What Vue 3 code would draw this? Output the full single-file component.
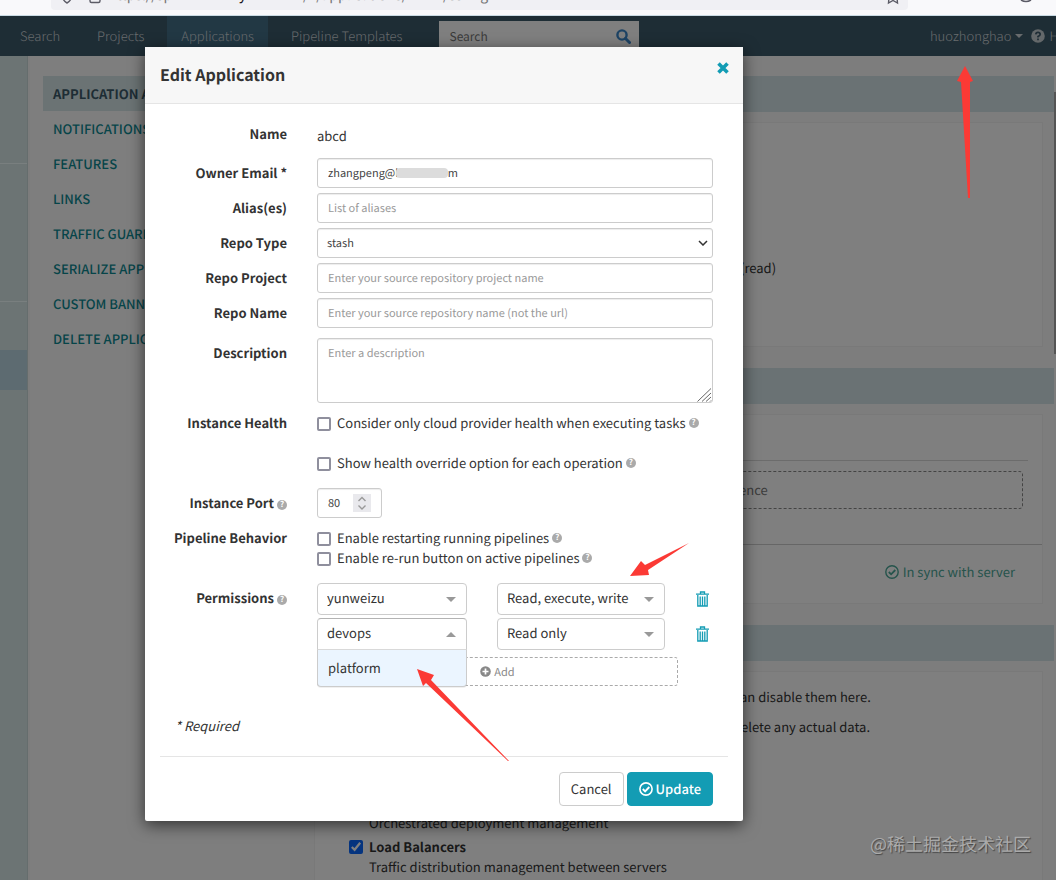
<script setup>
import { ref } from 'vue'

const sections = ['APPLICATION ATTRIBUTES', 'NOTIFICATIONS', 'FEATURES', 'LINKS', 'TRAFFIC GUARDS', 'SERIALIZE APPLICATION', 'CUSTOM BANNERS', 'DELETE APPLICATION']
const tabs = ['Search', 'Projects', 'Applications', 'Pipeline Templates']

const email = ref('zhangpeng@l' + '\u00a0'.repeat(20) + 'm')
const aliases = ref('')
const repoType = ref('stash')
const repoProject = ref('')
const repoName = ref('')
const description = ref('')
const port = ref(80)
const group = ref('yunweizu')
const firstAccess = ref('Read, execute, write')
const secondAccess = ref('Read only')
const menuOpen = ref(true)
</script>

<template>
  <div class="page">
    <div class="browser">
      <div class="address">
        <svg class="b-shield" width="12" height="8" viewBox="0 0 12 8"><path d="M1 0C2 4 4 6 6 7c2-1 4-3 5-7" fill="none" stroke="#5b5b66" stroke-width="1.4" /></svg>
        <svg class="b-lock" width="12" height="8" viewBox="0 0 12 8"><path d="M1 0v5q0 1.500 1.500 1.500h7Q11 6.500 11 5V0" fill="none" stroke="#5b5b66" stroke-width="1.400" /></svg>
        <span class="url-a">https://sp</span>
        <span class="url-b">y</span>
        <span class="url-c">/#/applications/</span>
        <span class="url-d">/config</span>
        <svg class="b-star" width="12" height="8" viewBox="0 0 12 8"><path d="M2 0 1.500 6 6 3.500 10.500 6 10 0" fill="none" stroke="#5b5b66" stroke-width="1.400" /></svg>
      </div>
      <svg class="b-ext" width="12" height="4" viewBox="0 0 12 4"><path d="M1 0q5 3 10 0" fill="none" stroke="#5b5b66" stroke-width="1.500" /></svg>
    </div>

    <div class="app">
      <header class="topbar">
        <nav class="tabs">
          <a v-for="t in tabs" :key="t" href="#" :class="{ active: t === 'Applications' }">{{ t }}</a>
        </nav>
        <div class="search">
          <input type="search" aria-label="Search" placeholder="Search" />
          <svg width="15" height="15" viewBox="0 0 15 15"><circle cx="6" cy="6" r="4.600" fill="none" stroke="#3a86c8" stroke-width="2.400" /><path d="m9.500 9.500 4 4" stroke="#3a86c8" stroke-width="3" stroke-linecap="round" /></svg>
        </div>
        <div class="user">
          <a href="#">huozhonghao<i class="caret"></i></a>
          <a href="#" class="help-link">
            <svg width="14" height="14" viewBox="0 0 14 14"><circle cx="7" cy="7" r="6.800" fill="#c8d0d4" /><path d="M4.800 5.400Q5 3.400 7 3.400t2.200 1.800Q9.200 6.500 7 7.600v.8M7 9.600v1.600" fill="none" stroke="#3e5a6c" stroke-width="1.700" /></svg>
            Help
          </a>
        </div>
      </header>

      <div class="body">
        <div class="rail"><i class="r1"></i><i class="r2"></i><i class="r3"></i></div>
        <nav class="side">
          <a v-for="(s, i) in sections" :key="s" href="#" :class="{ current: i === 0 }">{{ s }}</a>
        </nav>
        <main class="content">
          <section>
            <div class="bar"></div>
            <div class="card first"><p class="offset">(read)</p></div>
          </section>
          <section>
            <div class="bar"></div>
            <div class="card second">
              <div class="inner">
                <div class="rule"></div>
                <div class="dashed"><span>ence</span></div>
              </div>
              <div class="sync">
                <svg width="14" height="14" viewBox="0 0 14 14"><circle cx="7" cy="7" r="6.200" fill="none" stroke="currentColor" stroke-width="1.400" /><path d="m3.800 7 2.300 2.300 4.200-4.300" fill="none" stroke="currentColor" stroke-width="1.800" /></svg>
                In sync with server
              </div>
            </div>
          </section>
          <section>
            <div class="bar"></div>
            <div class="card third">
              <p class="offset">an disable them here.</p>
              <p class="offset next">delete any actual data.</p>
              <div class="features">
                <p>Orchestrated deployment management</p>
                <div class="feature">
                  <input id="lb" type="checkbox" checked />
                  <label for="lb">Load Balancers</label>
                </div>
                <p>Traffic distribution management between servers</p>
              </div>
            </div>
          </section>
        </main>
        <div class="scroll"></div>
      </div>

      <div class="backdrop">
        <div class="modal" role="dialog" aria-labelledby="title">
          <div class="modal-head">
            <h1 id="title">Edit Application</h1>
            <button type="button" class="close" aria-label="Close">
              <svg width="12" height="12" viewBox="0 0 12 12"><path d="m1.500 1.500 9 9m0-9-9 9" stroke="#139cb4" stroke-width="3.600" /></svg>
            </button>
          </div>

          <form class="form" @submit.prevent>
            <div class="row">
              <span class="label">Name</span>
              <span class="static">abcd</span>
            </div>
            <div class="row">
              <label class="label" for="email">Owner Email *</label>
              <div class="field"><input id="email" v-model="email" class="input" type="text" /><i class="smudge"></i></div>
            </div>
            <div class="row">
              <label class="label" for="alias">Alias(es)</label>
              <input id="alias" v-model="aliases" class="input" type="text" placeholder="List of aliases" />
            </div>
            <div class="row">
              <label class="label" for="type">Repo Type</label>
              <div class="field">
                <select id="type" v-model="repoType" class="input native"><option>stash</option></select>
                <svg class="chev" width="10" height="6" viewBox="0 0 10 6"><path d="m1 1 4 4 4-4" fill="none" stroke="#333" stroke-width="1.500" /></svg>
              </div>
            </div>
            <div class="row">
              <label class="label" for="project">Repo Project</label>
              <input id="project" v-model="repoProject" class="input" type="text" placeholder="Enter your source repository project name" />
            </div>
            <div class="row">
              <label class="label" for="repo">Repo Name</label>
              <input id="repo" v-model="repoName" class="input" type="text" placeholder="Enter your source repository name (not the url)" />
            </div>
            <div class="row spaced">
              <label class="label" for="desc">Description</label>
              <div class="field">
                <textarea id="desc" v-model="description" class="input area" placeholder="Enter a description"></textarea>
                <svg class="grip" width="15" height="14" viewBox="0 0 15 14"><path d="M0.500 13.500 14 0.500M5 13.500 14 5M9 13.500l5-4.500M13 13.500l1-1" stroke="#666" stroke-width="1" fill="none" /></svg>
              </div>
            </div>
            <div class="row">
              <span class="label">Instance Health</span>
              <div class="health">
                <label class="check"><input type="checkbox" />Consider only cloud provider health when executing tasks<i class="q">?</i></label>
                <label class="check"><input type="checkbox" />Show health override option for each operation<i class="q">?</i></label>
              </div>
            </div>
            <div class="row spaced">
              <label class="label" for="port">Instance Port<i class="q">?</i></label>
              <div class="port">
                <input id="port" v-model="port" class="input" type="number" />
                <svg class="spin" width="18" height="18" viewBox="0 0 18 18"><path fill="#e9e9ed" d="M0 0h18v18H0z" /><path d="m5.500 7 3.500-3.500L12.500 7m-7 4.500L9 15l3.500-3.500" fill="none" stroke="#999" stroke-width="1.400" /></svg>
              </div>
            </div>
            <div class="row">
              <span class="label">Pipeline Behavior</span>
              <div class="behavior">
                <label class="check"><input type="checkbox" />Enable restarting running pipelines<i class="q">?</i></label>
                <label class="check"><input type="checkbox" />Enable re-run button on active pipelines<i class="q">?</i></label>
              </div>
            </div>
            <div class="row spaced">
              <span class="label">Permissions<i class="q">?</i></span>
              <div class="perms">
                <div class="perm">
                  <div class="pick group"><select v-model="group" aria-label="Group"><option>yunweizu</option></select></div>
                  <div class="pick access"><select v-model="firstAccess" aria-label="Access"><option>Read, execute, write</option></select></div>
                  <button type="button" class="trash" aria-label="Remove yunweizu">
                    <svg width="15" height="16" viewBox="-1 0 15 16"><path d="M4.500 3V1h4v2M0 3.200h13M1.800 4v11h9.400V4M4.200 5.500v9M6.500 5.500v9M8.800 5.500v9" fill="none" stroke="#139cb4" stroke-width="1.300" /></svg>
                  </button>
                </div>
                <div class="perm">
                  <div class="pick group open">
                    <button type="button" aria-haspopup="listbox" :aria-expanded="menuOpen" @click="menuOpen = !menuOpen">devops</button>
                    <ul v-if="menuOpen" role="listbox" aria-label="Group"><li role="option">platform</li></ul>
                  </div>
                  <div class="pick access"><select v-model="secondAccess" aria-label="Access"><option>Read only</option></select></div>
                  <button type="button" class="trash" aria-label="Remove devops">
                    <svg width="15" height="16" viewBox="-1 0 15 16"><path d="M4.500 3V1h4v2M0 3.200h13M1.800 4v11h9.400V4M4.200 5.500v9M6.500 5.500v9M8.800 5.500v9" fill="none" stroke="#139cb4" stroke-width="1.300" /></svg>
                  </button>
                </div>
                <button type="button" class="add">
                  <svg width="11" height="11" viewBox="0 0 11 11"><circle cx="5.500" cy="5.500" r="5.300" fill="#888" /><path d="M5.500 2.500v6m-3-3h6" stroke="#fff" stroke-width="1.700" /></svg>
                  Add
                </button>
              </div>
            </div>
            <p class="required">* Required</p>
          </form>

          <div class="modal-foot">
            <button type="button" class="btn">Cancel</button>
            <button type="button" class="btn primary">
              <svg width="14" height="14" viewBox="0 0 14 14"><circle cx="7" cy="7" r="6.100" fill="none" stroke="#fff" stroke-width="1.600" /><path d="m3.800 7 2.300 2.300 4.200-4.300" fill="none" stroke="#fff" stroke-width="1.900" /></svg>
              Update
            </button>
          </div>
        </div>
      </div>
    </div>

    <svg class="arrows" width="1056" height="880" viewBox="0 0 1056 880" fill="#fb3a35">
      <path d="M965 66 957 81 961 82 968 198 970 198 970 82 973 81Z" />
      <path d="M630 576 641 561 645 565 689 543 648 570 649 575Z" />
      <path d="M417 669 434 675 431 680 509 761 508 761 426 683 423 686Z" />
    </svg>
    <div class="watermark">@稀土掘金技术社区</div>
  </div>
</template>

<style>
body { background: #fff; }
</style>

<style scoped>
* { box-sizing: border-box; }
.page { position: relative; height: 100vh; min-height: 840px; overflow: hidden; display: flex; flex-direction: column; font-family: "Noto Sans CJK SC", "Noto Sans", sans-serif; font-size: 13px; line-height: 20px; color: #333; text-rendering: geometricPrecision; }
a { text-decoration: none; color: inherit; }
p, h1, ul { margin: 0; padding: 0; }
button, input, select, textarea { font: inherit; color: inherit; text-rendering: inherit; }
button { cursor: pointer; }
i { font-style: normal; }

.browser { height: 16px; flex: none; position: relative; overflow: hidden; background: #f9f9fb; border-bottom: 1px solid #c9dae3; }
.address { position: relative; height: 10px; margin: 0 148px 0 51px; background: #f0f0f4; border-radius: 0 0 4px 4px; overflow: hidden; font-size: 14px; color: #777; }
.address span, .address svg { position: absolute; }
.address span { top: -15px; }
.b-shield { left: 10px; top: -4px; }
.b-lock { left: 38px; top: -4px; }
.b-star { right: 9px; top: -3px; }
.url-a { left: 57px; }
.url-b { left: 188px; color: #15141a; }
.url-c { left: 252px; }
.url-d { left: 392px; }
.b-ext { position: absolute; right: 24px; top: 0; }

.app { position: relative; flex: 1; min-height: 0; overflow: hidden; display: flex; flex-direction: column; }
.topbar { flex: none; height: 40px; display: flex; background: #3c5a6a; color: #d0d6da; line-height: 40px; overflow: hidden; white-space: nowrap; }
.tabs { display: flex; gap: 9px; padding-left: 6px; font-weight: 300; flex: none; }
.tabs a { padding: 0 14px; }
.tabs .active { background: #447089; }
.search { display: flex; align-items: center; width: 200px; height: 30px; flex: none; margin: 5px 0 0 23px; padding: 0 8px 0 10px; background: #fff; }
.search input { flex: 1; min-width: 0; border: 0; padding: 2px 0 0; background: none; outline: 0; line-height: 20px; font-size: 12px; }
.search input::placeholder { color: #777; opacity: 1; }
.user { display: flex; gap: 8px; margin-left: auto; margin-right: -21px; font-weight: 300; }
.user a { display: flex; align-items: center; gap: 4px; }
.caret { border: 4px solid transparent; border-top-color: currentColor; border-bottom: 0; }

.body { flex: 1; min-height: 0; display: flex; background: #f8f8f8; }
.rail { position: relative; width: 28px; flex: none; background: #d8e8e8; border-right: 1px solid #cbdada; }
.rail i { position: absolute; left: 0; right: 0; height: 1px; background: #f2ffff; }
.rail .r1 { top: 107px; }
.rail .r2 { top: 245px; }
.rail .r3 { top: 294px; height: 40px; background: #bad7e3; }
.side { width: 260px; flex: none; margin-left: 2px; padding: 20px 0 0 13px; background: #fdfdfd; display: flex; flex-direction: column; color: #0d8a93; }
.side a { line-height: 35px; padding-left: 10px; white-space: nowrap; font-weight: 500; }
.side .current { background: #d6e7e8; color: #3c5a6a; font-weight: 700; }
.content { flex: 1; min-width: 0; padding: 20px 0 0 13px; background: #fbfbfb; overflow: hidden; }
.bar { height: 36px; background: #d4e5e8; }
.card { margin: 10px 11px 21px; background: #fff; border: 1px solid #f3f3f3; }
.offset { padding-left: 425px; }
.first { height: 225px; padding-top: 135px; }
.second { height: 190px; }
.inner { height: 130px; padding: 45px 14px 0; border-bottom: 1px solid #cdcdcd; }
.rule { height: 1px; background: #d8d8d8; }
.dashed { height: 38px; margin: 10px 5px 0 0; padding-left: 409px; border: 1px dashed #888; border-radius: 4px; line-height: 36px; color: #777; }
.sync { display: flex; align-items: center; justify-content: flex-end; gap: 4px; height: 54px; padding-right: 27px; color: #4ca898; }
.third { height: 300px; padding-top: 15px; margin-bottom: 0; }
.next { margin-top: 10px; padding-left: 418px; }
.features { margin-top: 76px; padding-left: 54px; }
.feature { display: flex; align-items: center; margin: 4px 0 0 -20px; gap: 6px; font-weight: 700; }
.feature input { width: 14px; height: 14px; margin: 0; accent-color: #0a68ff; }
.scroll { width: 2px; flex: none; height: 262px; margin-top: 36px; background: #aaa; }

.backdrop { position: absolute; inset: 0; background: rgba(0, 0, 0, .5); padding: 31px 313px 0 145px; }
.modal { background: #fff; border-radius: 2px; box-shadow: 0 4px 16px rgba(0, 0, 0, .6); }
.modal-head { display: flex; align-items: flex-start; justify-content: space-between; height: 57px; padding: 0 14px 0 15px; background: #f7f7f7; border-bottom: 1px solid #e5e5e5; }
h1 { font-size: 16px; line-height: 54px; font-weight: 700; }
.close { border: 0; background: none; padding: 15px 0; line-height: 12px; display: flex; }
.form { display: flex; flex-direction: column; gap: 5px; padding: 15px 30px 0 0; }
.row { display: grid; grid-template-columns: 142px minmax(0, 1fr); column-gap: 30px; align-items: start; }
.spaced { margin-top: 5px; }
.label { line-height: 30px; text-align: right; font-weight: 700; }
.static { line-height: 34px; }
.field { position: relative; display: flex; }
.input { width: 100%; height: 30px; padding: 0 10px; border: 1px solid #ccc; border-radius: 3px; background: #fff; font-size: 11px; line-height: 20px; box-shadow: inset 0 1px 1px rgba(0, 0, 0, .075); outline: 0; color: #444; }
.input::placeholder { color: #999; opacity: 1; }
.native { appearance: none; padding: 0 9px; }
.chev { position: absolute; right: 5px; top: 12px; }
.area { height: 65px; padding: 4px 10px; resize: none; display: block; }
.grip { position: absolute; right: 1px; bottom: 1px; }
.smudge { position: absolute; left: 79px; top: 10px; width: 52px; height: 10px; border-radius: 4px; background: #dcdcdc; }
.check { display: flex; align-items: center; }
.check input { appearance: none; width: 14px; height: 14px; margin: 1px 6px 0 0; border: 2px solid #8f8f9d; border-radius: 2px; background: #fff; }
.health { display: grid; gap: 10px; line-height: 30px; }
.behavior { padding: 5px 0; }
.q { display: inline-block; width: 10px; height: 10px; margin-left: 3px; border-radius: 50%; background: #aaa; color: #fff; font-size: 8px; line-height: 10px; font-weight: 700; text-align: center; vertical-align: 1px; }
.port { position: relative; width: 65px; }
.port .input { display: block; appearance: textfield; }
.port .input::-webkit-inner-spin-button { appearance: none; }
.spin { position: absolute; right: 11px; top: 6px; }
.perms { display: flex; flex-direction: column; gap: 3px; }
.perm { display: flex; gap: 30px; }
.pick { position: relative; height: 32px; }
.pick select, .pick > button { display: block; width: 100%; height: 32px; appearance: none; border: 1px solid #ccc; border-radius: 4px; background: #fff; padding: 0 9px 2px; text-align: left; line-height: 20px; outline: 0; }
.pick::after { content: ""; position: absolute; right: 11px; top: 14px; border: 5px solid transparent; border-top-color: #999; border-bottom: 0; pointer-events: none; }
.open::after { border: 5px solid transparent; border-bottom-color: #999; border-top: 0; }
.pick.open > button { border-radius: 4px 4px 0 0; border-color: #b3b3b3 #ccc #d9d9d9; }
.group { width: 150px; }
.access { width: 168px; }
.open ul { position: absolute; z-index: 1; top: 32px; left: 0; right: 0; list-style: none; border: 1px solid #ccc; border-top: 0; border-radius: 0 0 4px 4px; background: #ebf5ff; padding: 8px 10px; box-shadow: 0 1px 0 rgba(0, 0, 0, .06); }
.trash { border: 0; background: none; padding: 0; display: flex; align-items: center; }
.add { display: flex; align-items: center; justify-content: center; gap: 3px; width: 361px; height: 29px; margin-top: 4px; border: 1px dashed #aaa; border-radius: 3px; background: #fff; font-size: 11px; color: #888; }
.required { padding: 25px 0 0 30px; font-style: italic; }
.modal-foot { display: flex; justify-content: flex-end; gap: 3px; margin: 20px 15px 0; padding: 15px 15px; border-top: 1px solid #e5e5e5; }
.btn { height: 34px; padding: 0 11px; border: 1px solid #ccc; border-radius: 4px; background: #fff; line-height: 20px; }
.primary { display: flex; align-items: center; gap: 3px; background: #139cb4; border-color: #139cb4; color: #fff; font-weight: 500; }
.arrows { position: absolute; z-index: 3; left: 0; top: 0; pointer-events: none; }
.watermark { position: absolute; z-index: 3; right: 25px; bottom: 22px; font-size: 18px; line-height: 28px; color: #aaa; text-shadow: 1px 1px 1px #444; }
</style>
